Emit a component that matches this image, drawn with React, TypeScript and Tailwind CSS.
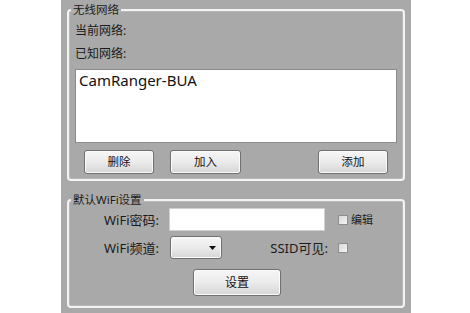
import { ReactNode } from "react";

const font = { fontFamily: '"Noto Sans", "Noto Sans CJK SC", sans-serif' };

function GroupBox({ title, children, className }: { title: string; children: ReactNode; className?: string }) {
    return (
        <fieldset className={`border-2 border-[#f3f3f3] rounded-[4px] p-0 m-0 shadow-[inset_0_0_0_1px_#b8b8b8] ${className ?? ""}`}>
            <legend className="ml-[2px] px-[2px] text-[11.5px] leading-[16px] text-[#1b1b1b]">{title}</legend>
            {children}
        </fieldset>
    );
}

function Button({ children, className }: { children: ReactNode; className?: string }) {
    return (
        <button className={`rounded-[3px] border border-[#707070] bg-gradient-to-b from-[#f6f6f6] via-[#ebebeb] to-[#d6d6d6] text-[#111] shadow-[inset_0_0_0_1px_#fbfbfb] ${className ?? ""}`}>
            {children}
        </button>
    );
}

function CheckBox() {
    return <span className="inline-block w-[10px] h-[10px] border border-[#8e8e8e] bg-gradient-to-br from-[#d8d8d8] to-[#f4f4f4]" />;
}

export default function App() {
    return (
        <div className="w-[470px] h-[313px] bg-white flex" style={font}>
            <div className="ml-[61px] w-[350px] h-[313px] bg-[#a9a9a9] px-[6px] pt-[2px] flex flex-col">
                <GroupBox title="无线网络" className="h-[179px]">
                    <div className="px-[6px] pt-[4px] flex flex-col">
                        <div className="text-[12px] leading-[18px] text-[#1b1b1b]">当前网络:</div>
                        <div className="mt-[5px] text-[12px] leading-[18px] text-[#1b1b1b]">已知网络:</div>
                        <div className="mt-[6px] h-[74px] bg-white border border-[#8c8c8c] px-[3px] py-[1px]">
                            <div className="text-[15px] leading-[18px] text-[#111]">CamRanger-BUA</div>
                        </div>
                        <div className="mt-[7px] flex">
                            <Button className="ml-[9px] w-[70px] h-[24px] text-[11.5px]">删除</Button>
                            <Button className="ml-[16px] w-[71px] h-[24px] text-[11.5px]">加入</Button>
                            <Button className="ml-[77px] w-[70px] h-[24px] text-[11.5px]">添加</Button>
                        </div>
                    </div>
                </GroupBox>
                <GroupBox title="默认WiFi设置" className="mt-[11px] h-[116px]">
                    <div className="flex flex-col text-[#1b1b1b]">
                        <div className="flex items-center h-[23px]">
                            <div className="w-[90px] text-right text-[13px] leading-[18px]">WiFi密码:</div>
                            <div className="ml-[10px] w-[156px] h-[23px] bg-white border border-[#d0d0d0]" />
                            <div className="ml-[13px] flex items-center">
                                <CheckBox />
                                <span className="ml-[3px] text-[11px] leading-[14px]">编辑</span>
                            </div>
                        </div>
                        <div className="mt-[5px] flex items-center h-[23px]">
                            <div className="w-[90px] text-right text-[13px] leading-[18px]">WiFi频道:</div>
                            <Button className="ml-[11px] w-[52px] h-[23px] flex items-center justify-end pr-[5px]">
                                <svg width="7" height="4" viewBox="0 0 7 4">
                                    <path d="M0 0 H7 L3.5 4 Z" fill="#111" />
                                </svg>
                            </Button>
                            <div className="w-[106px] text-right text-[13px] leading-[18px]">SSID可见:</div>
                            <span className="ml-[10px] flex items-center">
                                <CheckBox />
                            </span>
                        </div>
                        <div className="mt-[10px] flex">
                            <Button className="ml-[124px] w-[88px] h-[27px] text-[12px]">设置</Button>
                        </div>
                    </div>
                </GroupBox>
            </div>
        </div>
    );
}
